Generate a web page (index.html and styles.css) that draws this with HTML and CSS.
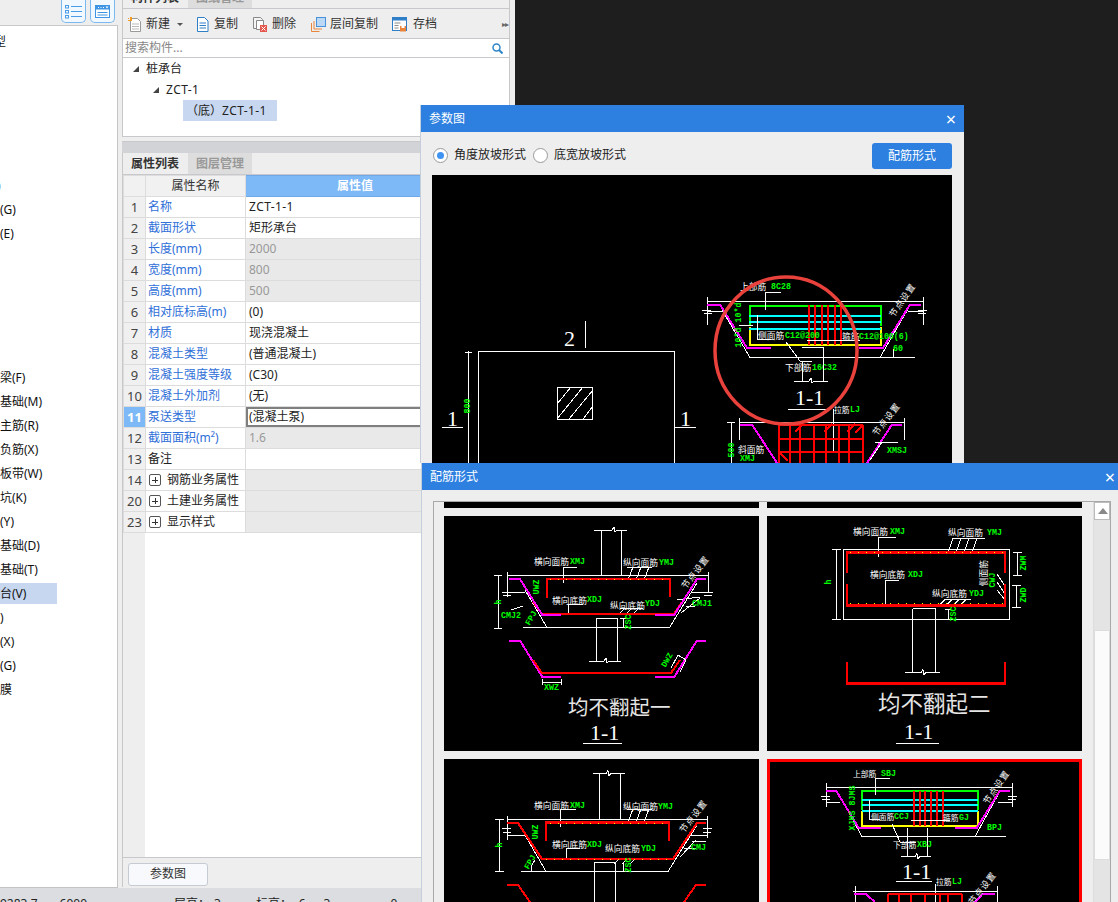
FILE: index.html
```html
<!DOCTYPE html>
<html lang="zh-CN">
<head>
<meta charset="utf-8">
<title>参数图</title>
<link rel="stylesheet" href="styles.css">
</head>
<body>
<div class="app">
  <aside class="left">
    <div class="left-bar">
      <span class="view-btn"><svg width="17" height="15" viewBox="0 0 17 15"><g class="ic-blue"><rect x="0.5" y="1.5" width="3" height="2.5"/><rect x="0.5" y="6.5" width="3" height="2.5"/><rect x="0.5" y="11.5" width="3" height="2.5"/><path d="M6 2.5h11M6 7.5h11M6 12.5h11"/></g></svg></span>
      <span class="view-btn"><svg width="15" height="13" viewBox="0 0 15 13"><rect x="0.5" y="0.5" width="14" height="12" fill="#fff" stroke="#3f94e4"/><rect x="0.5" y="0.5" width="14" height="4" fill="#3f94e4"/><path d="M3 2.500h1M5.500 2.500h1M8 2.500h1" stroke="#fff"/><path d="M10.500 1.500h3l-1.500 2z" fill="#fff"/><path d="M2.500 7.500h10M2.500 10h10" stroke="#3f94e4"/></svg></span>
    </div>
    <ul class="nav">
      <li><span class="cut">类型</span></li><li></li><li></li><li></li><li></li><li></li>
      <li><span class="cut-more">)</span></li><li>(G)</li><li>(E)</li>
      <li></li><li></li><li></li><li></li><li></li>
      <li>梁(F)</li><li>基础(M)</li><li>主筋(R)</li><li>负筋(X)</li><li>板带(W)</li><li>坑(K)</li><li>(Y)</li><li>基础(D)</li><li>基础(T)</li>
      <li class="on">台(V)</li><li>)</li><li>(X)</li><li>(G)</li><li>膜</li>
    </ul>
  </aside>

  <section class="mid">
    <div class="panel-a">
      <div class="tabs tabs-clipped"><span class="tab active">构件列表</span><span class="tab">图纸管理</span></div>
      <div class="toolbar">
        <span class="tool t-new"><svg width="13" height="15" viewBox="0 0 13 15"><path d="M2.500 1.500h7l3 3v10h-10z" fill="#fff" stroke="#999"/><path d="M4 7h7M4 9.500h7M4 12h7" stroke="#bbb"/><path d="M0 1h1v1H0zM2 0h2v3H2zM0 3h4v1H0z" fill="#f59a23"/></svg>新建<i class="caret"></i></span>
        <span class="tool t-copy"><svg width="13" height="15" viewBox="0 0 13 15"><path d="M1.500 0.500h7l3.500 3.500v10.500h-10.500z" fill="#fff" stroke="#2f7fc8"/><path d="M3.500 6h6.500M3.500 8.500h6.500M3.500 11h6.500" stroke="#2f7fc8"/></svg>复制</span>
        <span class="tool t-del"><svg width="15" height="15" viewBox="0 0 15 15"><path d="M0.500 0.500h7l2 2v9h-9z" fill="#f4f4f4" stroke="#888"/><path d="M3.500 3.500h7v9h-7z" fill="#fff" stroke="#888"/><rect x="7" y="8" width="7" height="7" fill="#e4574c"/><path d="M8.500 9.500l4 4M12.500 9.500l-4 4" stroke="#fff"/></svg>删除</span>
        <span class="tool t-floor"><svg width="15" height="15" viewBox="0 0 15 15"><path d="M0.500 6v8.500h8M3 4v8h8" fill="none" stroke="#e8853a"/><rect x="5.500" y="0.500" width="9" height="9" fill="#bcd8f7" stroke="#4a90d8"/></svg>层间复制</span>
        <span class="tool t-save"><svg width="15" height="15" viewBox="0 0 15 15"><rect x="0.500" y="0.500" width="14" height="13" fill="#fff" stroke="#2f7fc8"/><rect x="0.500" y="0.500" width="14" height="3" fill="#2f7fc8"/><path d="M2.500 6h6M2.500 8.500h4M2.500 11h4" stroke="#8a8a8a"/><rect x="8" y="9" width="6" height="5.500" fill="#e8853a"/><rect x="9.500" y="9" width="3" height="2" fill="#fff"/></svg>存档</span>
        <span class="more">▸▸</span>
      </div>
      <div class="search"><span>搜索构件...</span><svg width="11" height="11" viewBox="0 0 11 11"><circle cx="4.500" cy="4.500" r="3.500" fill="none" stroke="#2f86c8" stroke-width="1.500"/><path d="M7 7l3.500 3.500" stroke="#2f86c8" stroke-width="2"/></svg></div>
      <div class="tree">
        <div class="node lv0"><i class="tri"></i>桩承台</div>
        <div class="node lv1"><i class="tri"></i><span class="wide-latin">ZCT-1</span></div>
        <div class="node lv2"><span class="leaf">（底）<span class="wide-latin">ZCT-1-1</span></span></div>
      </div>
    </div>
    <div class="splitter"></div>
    <div class="panel-b">
      <div class="tabs"><span class="tab active">属性列表</span><span class="tab">图层管理</span></div>
      <div class="table-wrap">
        <table class="props">
          <colgroup><col class="c-n"><col class="c-k"><col class="c-v"></colgroup>
          <thead><tr><th></th><th>属性名称</th><th class="hv">属性值</th></tr></thead>
          <tbody>
            <tr><td>1</td><td class="k">名称</td><td><span class="wide-latin">ZCT-1-1</span></td></tr>
            <tr><td>2</td><td class="k">截面形状</td><td>矩形承台</td></tr>
            <tr class="ro"><td>3</td><td class="k">长度(mm)</td><td>2000</td></tr>
            <tr class="ro"><td>4</td><td class="k">宽度(mm)</td><td>800</td></tr>
            <tr class="ro"><td>5</td><td class="k">高度(mm)</td><td>500</td></tr>
            <tr><td>6</td><td class="k">相对底标高(m)</td><td>(0)</td></tr>
            <tr><td>7</td><td class="k">材质</td><td>现浇混凝土</td></tr>
            <tr><td>8</td><td class="k">混凝土类型</td><td>(普通混凝土)</td></tr>
            <tr><td>9</td><td class="k">混凝土强度等级</td><td>(C30)</td></tr>
            <tr><td>10</td><td class="k">混凝土外加剂</td><td>(无)</td></tr>
            <tr class="cur"><td>11</td><td class="k">泵送类型</td><td>(混凝土泵)</td></tr>
            <tr class="ro"><td>12</td><td class="k">截面面积(m²)</td><td>1.6</td></tr>
            <tr><td>13</td><td class="k plain">备注</td><td></td></tr>
            <tr class="grp"><td>14</td><td class="k plain"><i class="plus"></i>钢筋业务属性</td><td></td></tr>
            <tr class="grp"><td>20</td><td class="k plain"><i class="plus"></i>土建业务属性</td><td></td></tr>
            <tr class="grp"><td>23</td><td class="k plain"><i class="plus"></i>显示样式</td><td></td></tr>
          </tbody>
        </table>
      </div>
      <div class="footer"><button class="btn-param">参数图</button></div>
    </div>
  </section>

  <div class="dark"></div>

  <footer class="status"><span>9283.7</span><span>6000</span><span>层高：</span><span>3</span><span>标高：</span><span>-6</span><span>-3</span><span>0</span></footer>
</div>

<div class="dialog dlg-param">
  <header class="dlg-title"><span>参数图</span><span class="close">×</span></header>
  <div class="dlg-tools">
    <label class="radio checked"><i></i>角度放坡形式</label>
    <label class="radio"><i></i>底宽放坡形式</label>
    <button class="btn-blue">配筋形式</button>
  </div>
  <svg class="cad cad-main" viewBox="432 175 520 288" width="520" height="288">
    <!-- plan view -->
    <path class="w" d="M478.500 463V351.500H674.500V463"/>
    <path class="w" d="M585 321V348"/>
    <text class="big" x="564" y="338">2</text>
    <rect class="w" x="557.500" y="387.500" width="35" height="32"/>
    <path class="w" d="M557 404l14-17M557 419l26-32M569 419l24-29M583 419l10-13"/>
    <path class="w" d="M468.500 351V463M465 352h7"/>
    <text class="tg" transform="rotate(-90 467 406)" x="467" y="406" text-anchor="middle">800</text>
    <text class="big" x="447" y="418">1</text><path class="w" d="M442 427.500h21"/>
    <text class="big" x="680" y="418">1</text><path class="w" d="M674 427.500h22"/>
    <!-- section 1-1 -->
    <path class="w" d="M707 301.500H923M707 297V325M923 297V325M707 311h16M908 311h15"/>
    <path class="w" d="M702 310h9M704 313h8M918 310h9M918 313h8"/>
    <path class="w" d="M722 310L750 357.500H915M880 357.500L908 309M893 357.500v-9"/>
    <path class="g3" d="M749.500 326V305.500H881V326"/>
    <path class="y3" d="M749.500 327V345H881V327"/>
    <path class="c2" d="M749 316H881M749 322H881M749 328.500H881"/>
    <path class="r2" d="M809 305V345M815 305V345M822 305V345M828 305V345M834.500 305V345M841 305V345"/>
    <path class="m2" d="M707 304.500H720L747 348H771M859 348H883L910 304.500H921"/>
    <path class="w" d="M765 310V292H781M757 315V339H771M786 342L800 361H812M807 340H860M739 325H753"/>
    <text class="tw" x="740" y="286">上部筋</text><text class="tg" x="771" y="286">8C28</text>
    <text class="tg" transform="rotate(-90 738 325)" x="738" y="325" text-anchor="middle">10*d 10*d</text>
    <text class="tw" x="758" y="335">侧面筋</text><text class="tg" x="785" y="335">C12@200</text>
    <text class="tw" x="842" y="336">箍筋</text><text class="tg" x="859" y="336">C12@100(6)</text>
    <text class="tg" x="893" y="348">60</text>
    <text class="tw" x="785" y="367">下部筋</text><text class="tg" x="812" y="367">16C32</text>
    <text class="tw slant" transform="rotate(-55 902 300)" x="902" y="300" text-anchor="middle">节点设置</text>
    <path class="w" d="M802 361V381M823.500 347.500V381M802 347.500H823.500M794 381H809l2-3 1 5 2-2H828"/>
    <text class="big" x="795" y="397">1-1</text>
    <path class="w" d="M788 409.500H827"/>
    <text class="tw ts" x="834" y="409">拉筋</text><text class="tg" x="850" y="409">LJ</text>
    <path class="w" d="M739 422H904M739 418V440M904 418V440M833 409V453M731 422V463M727 422h8"/>
    <path class="r2" d="M779 425H863M779 439H863M779 452H863M779 425V463M790 425V463M800 425V463M814 425V463M826 425V463M839 425V463M849 425V463M863 425V463"/>
    <path class="r2" d="M795 432l8-8M824 432l8-8M847 432l8-8M779 452l9 9M855 433l8-8"/>
    <path class="m2" d="M740 424.500H752L777 463M867 463L892 424.500H902"/>
    <path class="w" d="M875 442H898M870 460l12-18"/>
    <text class="tg" transform="rotate(-90 731 450)" x="731" y="450" text-anchor="middle">500</text>
    <text class="tw" x="738" y="449">斜面筋</text><text class="tg" x="740" y="458">XMJ</text><text class="tg" x="887" y="450">XMSJ</text>
    <text class="tw slant" transform="rotate(-52 886 419)" x="886" y="419" text-anchor="middle">节点设置</text>
    <ellipse class="ring" cx="786" cy="350.500" rx="71" ry="73.500"/>
  </svg>
</div>

<div class="dialog dlg-form">
  <header class="dlg-title"><span>配筋形式</span><span class="close">×</span></header>
  <div class="frame">
    <div class="gallery">
      <div class="card stub"></div><div class="card stub"></div>

      <div class="card">
        <svg viewBox="444 516 315 235" width="315" height="235">
          <path class="w" d="M507 575.500H708M601 575V530M621 575V530M594 530H612l2-3 1 5 2-2H627"/>
          <path class="w" d="M507 572V597M708 572V593M507 592H525M692 592H708M498 575V628M494 575h8M494 628h8"/>
          <path class="w" d="M525 590L547 627.500M523 627.500H669.500L697 583"/>
          <path class="w" d="M502 592h9M503 595h8M704 592h9M704 595h8"/>
          <path class="w" d="M563 583V567H577M627 567H652M633 567l-5 13M641 567l-5 13M649 567l-5 13M568.500 615V604H583M620 608H643M625 608l-6 6M632 608l-6 6M639 608l-6 6"/>
          <path class="w" d="M596 618.500H617V661M596 618.500V661M589 661H604l2-3 1 5 2-2H621M523 606L511 610M677 600L700 597M681 613L700 598M686 606L695 606M623 618v9M620 618h6M620 627h6"/>
          <path class="r3" d="M547 598V579H670V597"/>
          <path class="yd" d="M550 579.500H668M548 613H672"/>
          <path class="r2" d="M533 602L542 614H674L682 602"/>
          <path class="m2" d="M509 579H520L542 614.500H561M655 614.500H674.500L697 579H706"/>
          <path class="m2" d="M509 640.500H520L542 676.500H561M655 676.500H674.500L697 640.500H706"/>
          <path class="r2" d="M533 660L542 673H671L680 660"/>
          <path class="w" d="M542 679V685M561 679V685M542 682H561M671 668L678 655L686 660L680 672"/>
          <text class="tw" x="534" y="561">横向面筋</text><text class="tg" x="570" y="561">XMJ</text>
          <text class="tw" x="623" y="562">纵向面筋</text><text class="tg" x="659" y="562">YMJ</text>
          <text class="tw" x="552" y="600">横向底筋</text><text class="tg" x="587" y="599">XDJ</text>
          <text class="tw" x="610" y="605">纵向底筋</text><text class="tg" x="645" y="603">YDJ</text>
          <text class="tg" x="692" y="603">CMJ1</text><text class="tg" x="501" y="615">CMJ2</text><text class="tg" x="544" y="687">XWZ</text>
          <text class="tg" transform="rotate(-90 536 587)" x="536" y="587" text-anchor="middle">UWZ</text>
          <text class="tg" transform="rotate(-90 498 602)" x="498" y="602" text-anchor="middle">h</text>
          <text class="tg" transform="rotate(-90 628 622)" x="628" y="622" text-anchor="middle">ZSC</text>
          <text class="tg" transform="rotate(-60 531 618)" x="531" y="618" text-anchor="middle">FPJ</text>
          <text class="tg" transform="rotate(-60 667 660)" x="667" y="660" text-anchor="middle">DWZ</text>
          <text class="tw slant" transform="rotate(-52 695 572)" x="695" y="572" text-anchor="middle">节点设置</text>
          <text class="cap" x="568" y="708">均不翻起一</text>
          <text class="big" x="590" y="732">1-1</text>
          <path class="w" d="M583 743.500H622"/>
        </svg>
      </div>

      <div class="card">
        <svg viewBox="767 516 315 235" width="315" height="235">
          <rect class="w" x="843.500" y="549.500" width="166" height="70"/>
          <path class="w" d="M836.500 549V619M832 549.500h9M832 619.500h9M1017.500 552V575M1013 552.500h9M1013 575h9M1016.500 585V607M1012 585h9M1012 607h9"/>
          <path class="w" d="M912.500 608.500H935.500V672M912.500 608.500V672M905 672.500H921l2-3 1 5 2-2H940"/>
          <path class="w" d="M878.500 557V537.500H896M953 538.500H985M953 538.500l-5 14M961 538.500l-5 14M969 538.500l-5 14M977 538.500l-5 14"/>
          <path class="w" d="M885 607L886 580H899M945 599.500H971M945 599.500l-6 6M952 599.500l-6 6M959 599.500l-6 6M966 599.500l-6 6M948 609V619M945 609h6"/>
          <path class="w" d="M997 574L1005 586M997 582L1005 594M997 590L1005 600"/>
          <path class="r3" d="M847 573V552.500H1005V573M847 584V605.500H1005V584"/>
          <path class="r3" d="M847 662V683.500H1005V662"/>
          <path class="yd" d="M850 552.500H1003M850 603H1003"/>
          <text class="tw" x="853" y="531">横向面筋</text><text class="tg" x="890" y="531">XMJ</text>
          <text class="tw" x="948" y="532">纵向面筋</text><text class="tg" x="987" y="532">YMJ</text>
          <text class="tw" x="870" y="574">横向底筋</text><text class="tg" x="908" y="574">XDJ</text>
          <text class="tw" x="932" y="593">纵向底筋</text><text class="tg" x="969" y="593">YDJ</text>
          <text class="tw" transform="rotate(-90 983 573)" x="983" y="573" text-anchor="middle">侧面筋</text>
          <text class="tg" transform="rotate(-90 992 580)" x="992" y="580" text-anchor="middle">CWJ</text>
          <text class="tg" transform="rotate(-90 1023 563)" x="1023" y="563" text-anchor="middle">ZWM</text>
          <text class="tg" transform="rotate(-90 1023 595)" x="1023" y="595" text-anchor="middle">ZWD</text>
          <text class="tg" transform="rotate(-90 828 582)" x="828" y="582" text-anchor="middle">h</text>
          <text class="tg" transform="rotate(-90 953 614)" x="953" y="614" text-anchor="middle">ZSC</text>
          <text class="cap wide" x="878" y="704">均不翻起二</text>
          <text class="big" x="904" y="731">1-1</text>
          <path class="w" d="M896 743.500H939"/>
        </svg>
      </div>

      <div class="card">
        <svg viewBox="444 759 315 235" width="315" height="235">
          <path class="w" d="M507 819.500H707M599.500 819V773.500M620.500 819V773.500M593 773.500H606l2-3 1 5 2-2H625"/>
          <path class="w" d="M507 816V840M707 816V838M507 835H525M690 835H707M499.500 819V871M495 819.500h9M495 871h9"/>
          <path class="w" d="M525 835L546 871.500M521 871.500H668L697 825M594.500 902V862.500H615.500V902M531 871.500c0-5 1-9 4-11"/>
          <path class="w" d="M502 828h9M503 832h8M703 828h9M703 832h8M692 841h14M680 857L696 840M684 848H696"/>
          <path class="w" d="M560 827V809H576M627 809H652M633 809l-5 13M641 809l-5 13M649 809l-5 13M566.500 860V848H580M615 858H643M620 858l-6 6M628 858l-6 6M636 858l-6 6M623 862v9"/>
          <path class="r3" d="M546 841V822.500H669V841"/>
          <path class="r2" d="M507 823H518L542 859H673L697 823H706"/>
          <path class="r2" d="M507 885H518L530 902M684 902L696 885H706"/>
          <path class="yd" d="M550 823H667M546 859H672"/>
          <text class="tw" x="534" y="805">横向面筋</text><text class="tg" x="570" y="805">XMJ</text>
          <text class="tw" x="623" y="806">纵向面筋</text><text class="tg" x="658" y="806">YMJ</text>
          <text class="tw" x="552" y="844">横向底筋</text><text class="tg" x="587" y="844">XDJ</text>
          <text class="tw" x="605" y="848">纵向底筋</text><text class="tg" x="641" y="848">YDJ</text>
          <text class="tg" x="691" y="847">CMJ</text>
          <text class="tg" transform="rotate(-90 535 832)" x="535" y="832" text-anchor="middle">UWZ</text>
          <text class="tg" transform="rotate(-90 499 845)" x="499" y="845" text-anchor="middle">h</text>
          <text class="tg" transform="rotate(-90 628 865)" x="628" y="865" text-anchor="middle">ZSC</text>
          <text class="tg" transform="rotate(-60 530 862)" x="530" y="862" text-anchor="middle">FPJ</text>
          <text class="tw slant" transform="rotate(-52 693 816)" x="693" y="816" text-anchor="middle">节点设置</text>
        </svg>
      </div>

      <div class="card selected">
        <svg viewBox="767 759 315 235" width="315" height="235">
          <path class="w" d="M826 787.500H1012M826 783V807M1012 783V807M826 802H840M998 802H1012M821 796h9M822 799h8M1008 796h9M1008 799h8"/>
          <path class="w" d="M839 795L862 836.500H1006M975 836.500L999 793"/>
          <path class="g3" d="M862 810V790.500H977.500V810"/>
          <path class="y3" d="M862 811V826H977.500V811"/>
          <path class="c2" d="M862 800H977.500M862 805H977.500M862 811H977.500"/>
          <path class="r2" d="M914 790.500V826M919.500 790.500V826M925 790.500V826M931 790.500V826M936.500 790.500V826M942.500 790.500V826"/>
          <path class="m2" d="M826 790.500H836L858.500 827.500H881M955 827.500H977L1000 790.500H1010"/>
          <path class="w" d="M875.500 795V778H890M869 800V819H880M892 824L900 842H916M911 820H950"/>
          <path class="w" d="M907.500 827.500V856M927 827.500V856M901 856.500H915l2-3 1 5 2-2H931"/>
          <text class="tw ts" x="853" y="773">上部筋</text><text class="tg" x="881" y="773">SBJ</text>
          <text class="tw ts" x="871" y="816">侧面筋</text><text class="tg" x="894" y="816">CCJ</text>
          <text class="tw ts" x="943" y="817">箍筋</text><text class="tg" x="959" y="817">GJ</text>
          <text class="tg" x="987" y="827">BPJ</text>
          <text class="tw ts" x="893" y="844">下部筋</text><text class="tg" x="917" y="844">XBJ</text>
          <text class="tg" transform="rotate(-90 852 808)" x="852" y="808" text-anchor="middle">XJMS 8JMS</text>
          <text class="tw slant" transform="rotate(-55 996 787)" x="996" y="787" text-anchor="middle">节点设置</text>
          <text class="big" x="902" y="871">1-1</text>
          <path class="w" d="M896 881.500H932"/>
          <text class="tw ts" x="936" y="881">拉筋</text><text class="tg" x="952" y="881">LJ</text>
          <path class="w" d="M853 891.500H997M855 886V902M997 886V902M935 884V902"/>
          <path class="r2" d="M888 894H962M888 894V902M899 894V902M911 894V902M925 894V902M940 894V902M948 894V902M962 894V902"/>
          <path class="m2" d="M854 893.500H865L875 902M975 902L983 893.500H995"/>
          <text class="tw slant" transform="rotate(-52 982 888)" x="982" y="888" text-anchor="middle">节点设置</text>
        </svg>
      </div>
    </div>
    <div class="scroll">
      <span class="sb-up"></span>
      <span class="sb-track"></span>
      <span class="sb-thumb"></span>
      <span class="sb-rest"></span>
    </div>
  </div>
</div>
</body>
</html>
```
FILE: styles.css
```css
* { box-sizing: border-box; }
html, body { margin: 0; padding: 0; }
body {
  width: 1118px; height: 902px; overflow: hidden; position: relative;
  background: #eee; color: #222;
  font: 12px/1.2 "Noto Sans", "Noto Sans CJK SC", sans-serif;
}
ul { list-style: none; margin: 0; padding: 0; }
i { font-style: normal; }
button { font: inherit; cursor: default; }

.app {
  display: grid; width: 1118px; height: 902px;
  grid-template-columns: 118px 397px 603px;
  grid-template-rows: 888px 14px;
}
.left { grid-column: 1; grid-row: 1; display: flex; flex-direction: column; overflow: hidden; }
.mid { grid-column: 2; grid-row: 1; margin: 0 5px 0 4px; display: flex; flex-direction: column; min-width: 0; height: 887px; }
.dark { grid-column: 3; grid-row: 1 / 3; background: #1e1e1e; }
.status {
  grid-column: 1 / 3; grid-row: 2; background: #dcdde0; overflow: hidden;
  display: flex; padding-top: 8px; line-height: 16px; white-space: nowrap;
}
.status span:nth-child(2) { margin-left: 22px; }
.status span:nth-child(3) { margin-left: 87px; }
.status span:nth-child(4) { margin-left: 4px; }
.status span:nth-child(5) { margin-left: 35px; }
.status span:nth-child(6) { margin-left: 3px; }
.status span:nth-child(7) { margin-left: 14px; }
.status span:nth-child(8) { margin-left: 60px; }

/* left column */
.left-bar { height: 25px; display: flex; justify-content: flex-end; gap: 4px; padding-right: 3px; flex: none; }
.view-btn {
  width: 25px; height: 23px; border: 1px solid #7ab8f0; border-top: 0;
  border-radius: 0 0 5px 5px; background: #f2f8ff;
  display: flex; align-items: center; justify-content: center;
}
.ic-blue rect { fill: none; stroke: #4a9be8; }
.ic-blue path { stroke: #4a9be8; fill: none; }
.nav {
  flex: 1; background: #fff; border-top: 1px solid #c8c8c8; border-right: 1px solid #c4c4c4; border-bottom: 1px solid #c4c4c4;
  padding-top: 5px; display: flex; flex-direction: column; gap: 3px; overflow: hidden;
}
.nav li { height: 21px; line-height: 21px; white-space: nowrap; flex: none; color: #111; }
.nav li.on { background: #c7d7ef; width: 57px; }
.cut { margin-left: -18px; }
.cut-more { margin-left: -3px; color: #111; }

/* tabs */
.tabs { display: flex; height: 22px; background: #eee; border-bottom: 1px solid #c8c8cc; flex: none; align-items: flex-end; }
.tabs-clipped { height: 9px; overflow: hidden; }
.tab {
  width: 65px; height: 21px; flex: none; line-height: 21px; text-align: center;
  background: #ddd; color: #999; font-weight: 700; border-left: 1px solid #eee;
}
.tab.active { background: #eee; color: #333; border-left: 0; width: 64px; }

/* upper panel */
.panel-a { display: flex; flex-direction: column; height: 137px; border-left: 1px solid #c8c8cc; border-right: 1px solid #c8c8cc; border-bottom: 1px solid #c8c8cc; flex: none; }
.toolbar { height: 29px; display: flex; align-items: center; background: #eee; flex: none; padding-top: 1px; }
.tool { display: flex; align-items: center; flex: none; color: #333; }
.tool svg { margin-right: 5px; }
.t-new { margin-left: 5px; }
.t-copy { margin-left: 13px; }
.t-del { margin-left: 15px; }
.t-del svg { margin-right: 4px; }
.t-floor { margin-left: 15px; }
.t-floor svg { margin-right: 4px; }
.t-save { margin-left: 14px; }
.t-save svg { margin-right: 6px; }
.caret { width: 0; height: 0; border: 3px solid transparent; border-top: 3px solid #555; border-bottom: 0; margin-left: 7px; }
.more { margin-left: auto; margin-right: 1px; font-size: 8px; color: #666; letter-spacing: -1px; }
.search {
  height: 20px; background: #fff; border-top: 1px solid #c8c8cc; border-bottom: 1px solid #c8c8cc;
  display: flex; align-items: center; justify-content: space-between; padding: 1px 6px 0 2px; color: #888; flex: none;
}
.tree { flex: 1; background: #fff; }
.node { height: 21px; line-height: 21px; display: flex; align-items: center; color: #222; }
.lv0 { padding-left: 10px; }
.lv1 { padding-left: 30px; }
.lv2 { padding-left: 60px; }
.tri { width: 0; height: 0; border-style: solid; border-width: 0 0 6px 6px; border-color: transparent transparent #444 transparent; margin-right: 7px; }
.leaf { background: #c7d7ef; height: 21px; width: 94px; padding-left: 3px; white-space: nowrap; }
.wide-latin { letter-spacing: 0.4px; }
.splitter { height: 12px; margin-top: 4px; background: #d2d3d7; border-top: 1px solid #c8c8cc; flex: none; }

/* lower panel */
.panel-b { flex: 1; display: flex; flex-direction: column; border-left: 1px solid #c8c8cc; min-height: 0; }
.table-wrap { flex: 1; background: linear-gradient(to right, #eee 22px, #fff 22px); }
.props { border-collapse: collapse; table-layout: fixed; width: 387px; }
.c-n { width: 22px; }
.c-k { width: 100px; }
.props th, .props td { height: 21px; padding: 0 0 0 3px; border: 1px solid #dcdcdc; white-space: nowrap; overflow: hidden; font-weight: 400; line-height: 18px; }
.props th { background: #f1f1f1; text-align: center; color: #333; padding: 0; border-color: #ddd; }
.props th.hv { background: #7db8f7; color: #fff; font-weight: 700; border-color: #6fa8e6; padding-right: 45px; }
.props td:first-child { background: #f0f0f0; text-align: center; color: #444; padding: 0; font-size: 13px; }
.props td { background: #fff; color: #222; }
.props td.k { color: #2f6fd8; padding-left: 2px; }
.props td.plain { color: #222; }
.ro td:last-child { background: #e9e9e9; color: #999; }
.grp td:last-child { background: #e9e9e9; }
.props .cur td:first-child { background: #7db8f7; color: #fff; font-weight: 700; }
.cur td:last-child { box-shadow: inset 0 0 0 2px #7f7f7f; }
.plus { display: inline-block; width: 12px; height: 12px; border: 1px solid #555; border-radius: 2px; margin: 0 6px 0 1px; vertical-align: -2px; position: relative; background: #fff; }
.plus::before { content: ""; position: absolute; left: 2px; top: 4.500px; width: 6px; height: 1px; background: #333; }
.plus::after { content: ""; position: absolute; left: 4.500px; top: 2px; width: 1px; height: 6px; background: #333; }
.footer { height: 30px; background: #eee; border-top: 1px solid #c8c8cc; padding: 5px 0 0 5px; flex: none; }
.btn-param { width: 80px; height: 23px; background: #f8f9fc; border: 1px solid #c6cad3; border-radius: 3px; color: #333; padding: 0; }

/* dialogs (windows over the app) */
.dialog { position: absolute; display: flex; flex-direction: column; background: #eee; overflow: hidden; }
.dlg-param { left: 420px; top: 105px; width: 544px; height: 358px; border-left: 1px solid #c5cedd; }
.dlg-form { left: 421px; top: 463px; width: 697px; height: 439px; border-left: 1px solid #c5cedd; }
.dlg-title {
  height: 27px; background: #2d7fe0; color: #fff; flex: none;
  display: flex; align-items: center; justify-content: space-between; padding: 2px 8px 0 8px;
}
.dlg-form .dlg-title { padding-right: 3px; }
.close { font-size: 18px; line-height: 1; margin-top: -2px; }
.dlg-tools { height: 43px; display: flex; align-items: center; flex: none; padding: 5px 12px 0 12px; color: #222; }
.radio { display: flex; align-items: center; width: 100px; white-space: nowrap; margin-top: -2px; }
.radio i { width: 15px; height: 15px; border: 1px solid #9a9a9a; border-radius: 50%; background: #fff; margin-right: 6px; flex: none; position: relative; }
.radio.checked i::after { content: ""; position: absolute; left: 3px; top: 3px; width: 7px; height: 7px; border-radius: 50%; background: #3f93f2; }
.btn-blue { margin-left: auto; width: 80px; height: 26px; background: #2d7fe0; color: #fff; border: 0; border-radius: 3px; padding: 0; }
.cad { display: block; background: #000; margin-left: 11px; flex: none; }

.frame { margin: 11px 7px 0 11px; flex: 1; display: flex; border: 1px solid #a8a8a8; border-bottom: 0; background: #eee; min-height: 0; }
.gallery {
  flex: 1; padding-left: 10px; overflow: hidden;
  display: grid; grid-template-columns: 315px 315px; grid-auto-rows: 235px; grid-template-rows: 6px; gap: 8px;
}
.card { background: #000; overflow: hidden; position: relative; }
.card svg { display: block; }
.card.selected { outline: 3px solid #f00; outline-offset: -3px; }
.scroll { width: 17px; display: flex; flex-direction: column; flex: none; border-left: 1px solid #ddd; }
.sb-up { height: 18px; background: #fff; border: 1px solid #bbb; position: relative; flex: none; }
.sb-up::after { content: ""; position: absolute; left: 3px; top: 5px; border: 5px solid transparent; border-top: 0; border-bottom: 6px solid #888; }
.sb-track { height: 110px; background: #e4e4e4; flex: none; }
.sb-thumb { height: 230px; background: #fbfbfb; border: 1px solid #ddd; flex: none; }
.sb-rest { flex: 1; background: #e4e4e4; }

/* CAD strokes */
.cad path, .cad rect, .card path, .card rect { fill: none; shape-rendering: crispEdges; }
.w { stroke: #fff; stroke-width: 1; }
.r2 { stroke: #f00; stroke-width: 2; }
.r3 { stroke: #f00; stroke-width: 2.500; }
.m2 { stroke: #f0f; stroke-width: 2; }
.g3 { stroke: #0f0; stroke-width: 2; }
.y3 { stroke: #ff0; stroke-width: 2; }
.c2 { stroke: #0ff; stroke-width: 2; }
.yd { stroke: #ff0; stroke-width: 1; stroke-dasharray: 1 7; }
.ring { fill: none; stroke: #e9413b; stroke-width: 3.500; }
.cad text, .card text { dominant-baseline: central; }
.tw { fill: #fff; font: 8.750px "Noto Sans CJK SC", sans-serif; }
.tw.ts { font-size: 7.800px; }
.tg { fill: #0f0; font: 700 8.300px "Liberation Mono", monospace; }
.slant { letter-spacing: 1px; }
.big { fill: #fff; font: 22px "Liberation Serif", serif; }
.cap { fill: #e4e4e4; font: 20.500px "Liberation Serif", "Noto Sans CJK SC", serif; }
.cap.wide { font-size: 22.500px; }
```
